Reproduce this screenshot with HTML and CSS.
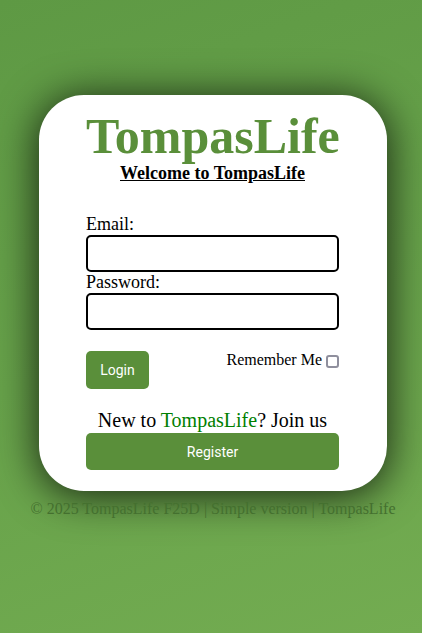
FILE: index.html
```html
<!DOCTYPE html>
<html lang="en">
<head>
<meta charset="utf-8">
<title>TompasLife</title>
<link rel="stylesheet" href="styles.css">
</head>
<body>
<div class="page">
  <div class="card">
    <h1 class="brand">TompasLife</h1>
    <h2 class="welcome">Welcome to TompasLife</h2>
    <form class="form">
      <label class="field-label" for="email">Email:</label>
      <input class="field" id="email" type="email">
      <label class="field-label" for="password">Password:</label>
      <input class="field" id="password" type="password">
      <div class="actions">
        <button class="btn btn-login" type="button">Login</button>
        <label class="remember">Remember Me <span class="check"></span></label>
      </div>
      <p class="join">New to <span class="join-brand">TompasLife</span>? Join us</p>
      <button class="btn btn-register" type="button">Register</button>
    </form>
  </div>
  <p class="footer">© 2025 TompasLife F25D | Simple version | TompasLife</p>
</div>
</body>
</html>
```
FILE: styles.css
```css
html, body {
  margin: 0;
  padding: 0;
}
body {
  min-height: 100vh;
  background: linear-gradient(160deg, #5e9944 0%, #67a24a 50%, #73ac51 100%);
  font-family: "Liberation Serif", "Times New Roman", serif;
  color: #000;
}
.page {
  display: flex;
  flex-direction: column;
  align-items: center;
  padding: 95px 0 0 4px;
}
.card {
  width: 253px;
  padding: 14px 48px 21px 47px;
  background: #fff;
  border-radius: 45px;
  box-shadow: 0 4px 40px 2px rgba(0, 0, 0, 0.75);
}
.brand {
  margin: 0;
  font-size: 50px;
  line-height: 54px;
  font-weight: bold;
  text-align: center;
  white-space: nowrap;
  color: #5a8f3a;
}
.welcome {
  margin: 0;
  font-size: 18px;
  line-height: 21px;
  font-weight: bold;
  text-align: center;
  text-decoration: underline;
}
.form {
  display: flex;
  flex-direction: column;
  margin-top: 30px;
}
.field-label {
  font-size: 18px;
  line-height: 21px;
}
.field {
  box-sizing: border-box;
  height: 37px;
  width: 100%;
  margin: 0;
  border: 2px solid #000;
  border-radius: 5px;
  background: #fff;
}
.actions {
  display: flex;
  justify-content: space-between;
  align-items: flex-start;
  margin-top: 21px;
  margin-right: -3px;
}
.btn {
  border: none;
  border-radius: 5px;
  background: #5a8f3a;
  color: #fff;
  font-family: Roboto, "Noto Sans", sans-serif;
  font-size: 14px;
  cursor: pointer;
}
.btn-login {
  width: 63px;
  height: 38px;
  padding: 0;
}
.remember {
  display: flex;
  align-items: center;
  font-size: 16px;
  line-height: 18px;
}
.check {
  box-sizing: border-box;
  width: 13px;
  height: 13px;
  margin: 2px 3px 0 4px;
  border: 2px solid #8f8f9d;
  border-radius: 3px;
}
.join {
  margin: 20px 0 0;
  font-size: 20px;
  line-height: 23px;
  text-align: center;
}
.join-brand {
  color: #008000;
}
.btn-register {
  width: 100%;
  height: 37px;
  margin-top: 1px;
}
.footer {
  margin: 9px 0 0;
  font-size: 16px;
  line-height: 18px;
  color: #44702f;
}
```
